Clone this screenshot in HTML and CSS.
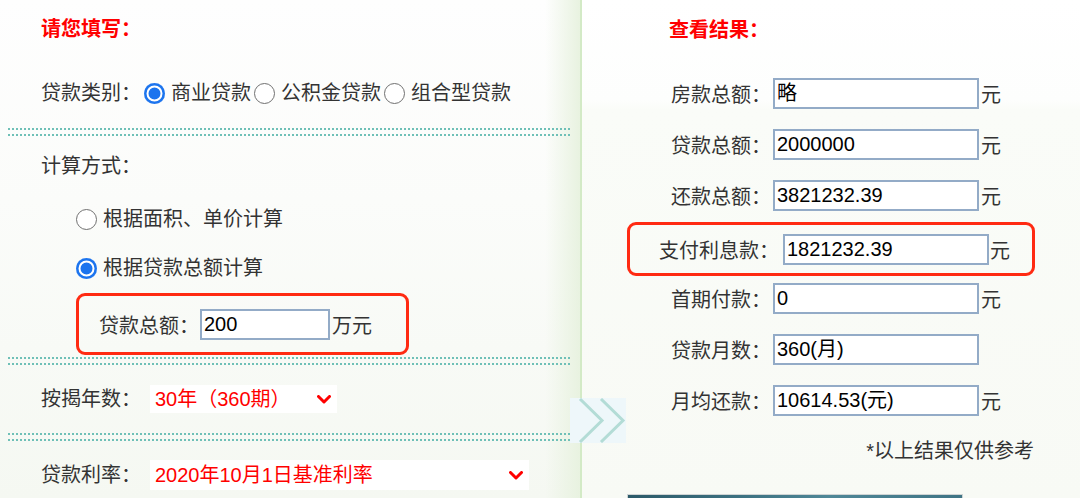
FILE: index.html
```html
<!DOCTYPE html>
<html lang="zh-CN">
<head>
<meta charset="utf-8">
<title>房贷计算器</title>
<link rel="stylesheet" href="styles.css">
</head>
<body>
<div class="page">
  <section class="left">
    <h2 class="title">请您填写：</h2>
    <div class="row type-row">
      <span class="label">贷款类别：</span>
      <span class="radio checked"></span><span class="opt">商业贷款</span>
      <span class="radio"></span><span class="opt">公积金贷款</span>
      <span class="radio"></span><span class="opt">组合型贷款</span>
    </div>
    <div class="sep sep-1"></div>
    <div class="row method-row"><span class="label">计算方式：</span></div>
    <div class="row sub sub-1"><span class="radio"></span><span class="opt">根据面积、单价计算</span></div>
    <div class="row sub sub-2"><span class="radio checked"></span><span class="opt">根据贷款总额计算</span></div>
    <div class="hl-box amount-box">
      <span class="label">贷款总额：</span><span class="field amount">200</span><span class="unit">万元</span>
    </div>
    <div class="sep sep-2"></div>
    <div class="row select-row years-row">
      <span class="label">按揭年数：</span>
      <span class="select short">30年（360期）<svg class="caret" viewBox="0 0 14 9" width="14" height="9"><polyline points="1.5,1.5 7,7 12.5,1.5" fill="none" stroke="#f00" stroke-width="3" stroke-linecap="round" stroke-linejoin="round"/></svg></span>
    </div>
    <div class="sep sep-3"></div>
    <div class="row select-row rate-row">
      <span class="label">贷款利率：</span>
      <span class="select long">2020年10月1日基准利率<svg class="caret" viewBox="0 0 14 9" width="14" height="9"><polyline points="1.5,1.5 7,7 12.5,1.5" fill="none" stroke="#f00" stroke-width="3" stroke-linecap="round" stroke-linejoin="round"/></svg></span>
    </div>
  </section>
  <div class="divider"></div>
  <section class="right">
    <h2 class="title">查看结果：</h2>
    <div class="results">
      <div class="res-row"><span class="label">房款总额：</span><span class="field">略</span><span class="unit">元</span></div>
      <div class="res-row"><span class="label">贷款总额：</span><span class="field">2000000</span><span class="unit">元</span></div>
      <div class="res-row"><span class="label">还款总额：</span><span class="field">3821232.39</span><span class="unit">元</span></div>
      <div class="hl-box interest-box"><span class="label wide">支付利息款：</span><span class="field">1821232.39</span><span class="unit">元</span></div>
      <div class="res-row"><span class="label">首期付款：</span><span class="field">0</span><span class="unit">元</span></div>
      <div class="res-row"><span class="label">贷款月数：</span><span class="field">360(月)</span></div>
      <div class="res-row"><span class="label">月均还款：</span><span class="field">10614.53(元)</span><span class="unit">元</span></div>
    </div>
    <p class="note">*以上结果仅供参考</p>
    <div class="banner"></div>
  </section>
  <div class="arrow-badge">
    <svg viewBox="0 0 56 45" width="56" height="45">
      <polyline points="10,1 32,22.5 10,44" fill="none" stroke="#b3dcd6" stroke-width="3"/>
      <polyline points="31,1 53,22.5 31,44" fill="none" stroke="#b3dcd6" stroke-width="3"/>
    </svg>
  </div>
</div>
</body>
</html>
```

FILE: styles.css
```css
* { box-sizing: border-box; }

html, body {
  margin: 0;
  padding: 0;
  width: 1080px;
  height: 498px;
  overflow: hidden;
  background: #fbfcf9;
  font-family: "Liberation Sans", "Noto Sans CJK SC", sans-serif;
  font-size: 20px;
  color: #333;
}

.page {
  position: relative;
  display: flex;
  width: 1080px;
  height: 498px;
  overflow: hidden;
}

/* ---------- left ---------- */
.left {
  width: 580px;
  height: 498px;
  flex: none;
  padding-top: 14px;
  background:
    linear-gradient(to right, rgba(233, 243, 226, 0) 0, rgba(233, 243, 226, 0) 545px, #e8f2e0 580px),
    linear-gradient(#fefefe 0, #fbfcfa 200px, #f5f8f2 100%);
}

.title {
  margin: 0;
  height: 30px;
  line-height: 30px;
  font-size: 20px;
  font-weight: bold;
  color: #f00;
}

.left .title { padding-left: 41px; }

.row {
  display: flex;
  align-items: center;
  height: 30px;
  line-height: 30px;
  padding-left: 41px;
  white-space: nowrap;
}

.label { flex: none; width: 100px; }

.radio {
  flex: none;
  width: 21px;
  height: 21px;
  border-radius: 50%;
  border: 1.5px solid #707070;
  background: #fff;
}

.radio.checked {
  border: none;
  background: #1c74ee;
  box-shadow: inset 0 0 0 2.5px #1c74ee, inset 0 0 0 4.5px #fff;
}

.type-row { margin-top: 34px; }
.type-row .radio { margin: 0 6px 0 3px; }

.sep {
  height: 8px;
  margin: 0 10px 0 8px;
  border-top: 2px dotted #6fc0b7;
  border-bottom: 2px dotted #6fc0b7;
}

.sep-1 { margin-top: 20px; }
.method-row { margin-top: 15px; }

.sub { padding-left: 76px; }
.sub .radio { margin-right: 6px; }
.sub-1 { margin-top: 23px; }
.sub-2 { margin-top: 19px; }

.hl-box {
  display: flex;
  align-items: center;
  border: 3px solid #ff2a12;
  border-radius: 9px;
  white-space: nowrap;
}

.amount-box {
  margin: 10px 0 0 76px;
  width: 333px;
  height: 62px;
  padding-left: 20px;
}

.field {
  flex: none;
  display: block;
  width: 206px;
  height: 31px;
  line-height: 27px;
  padding-left: 2px;
  background: #fff;
  border: 2px solid #93abc7;
  color: #000;
}

.field.amount { width: 130px; margin-left: 1px; }

.unit { flex: none; margin-left: 2px; }

.sep-2 { margin-top: 2px; }

.select-row { margin-top: 19px; }

.select {
  display: flex;
  align-items: center;
  justify-content: space-between;
  margin-left: 9px;
  padding: 0 6px 0 5px;
  background: #fff;
  color: #f00;
}

.select.short { width: 187px; height: 28px; }
.select.long { width: 379px; height: 30px; }

.caret { flex: none; }

.sep-3 { margin-top: 19px; }

/* ---------- divider ---------- */
.divider {
  flex: none;
  width: 2px;
  height: 498px;
  background: #d3eac6;
}

/* ---------- right ---------- */
.right {
  flex: 1;
  height: 498px;
  padding-top: 15px;
  background: linear-gradient(#ffffff 0, #fdfefd 100px, #fafcf8 110px, #f8faf5 100%);
}

.right .title { padding-left: 87px; }

.results {
  display: flex;
  flex-direction: column;
  gap: 20px;
  margin-top: 33px;
}

.res-row {
  display: flex;
  align-items: center;
  height: 31px;
  padding-left: 89px;
  white-space: nowrap;
}

.res-row .field { margin-left: 2px; }

.interest-box {
  margin: -9px 0 -13px 45px;
  width: 408px;
  height: 54px;
  padding-left: 29px;
}

.label.wide { width: 120px; }
.interest-box .field { margin-left: 4px; }
.interest-box .unit { margin-left: 1px; }

.note {
  margin: 20px 46px 0 0;
  height: 30px;
  line-height: 30px;
  text-align: right;
}

.banner {
  margin: 28px 0 0 45px;
  width: 336px;
  height: 5px;
  border: 1px solid #cfd4d4;
  border-bottom: none;
  background: linear-gradient(to right, #2c5a69 0, #3d7282 35%, #4f8797 60%, #3f7485 100%);
}

.arrow-badge {
  position: absolute;
  left: 570px;
  top: 398px;
  width: 56px;
  height: 45px;
  background: #eef7fa;
}

.arrow-badge svg { display: block; }
```
